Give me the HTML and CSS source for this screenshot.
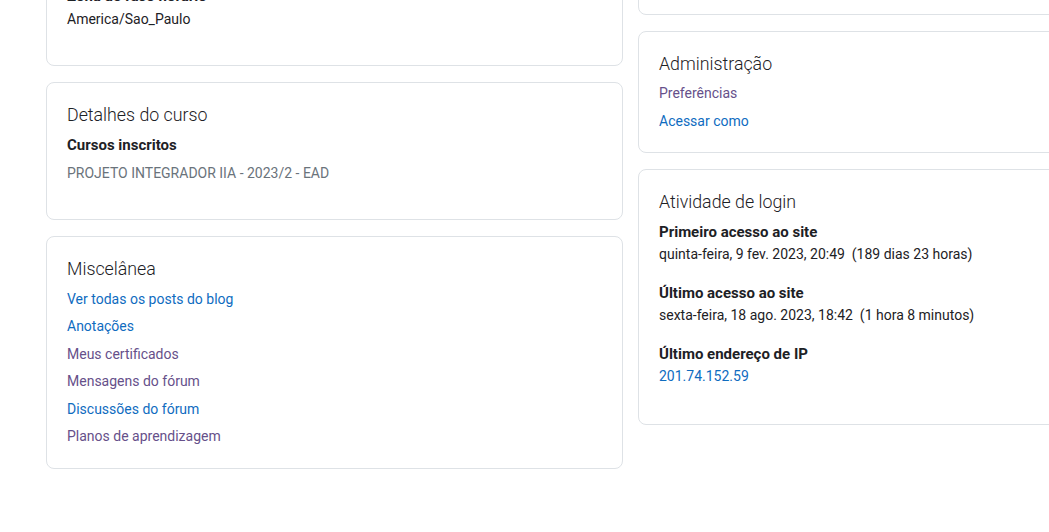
FILE: index.html
```html
<!DOCTYPE html>
<html lang="pt-br">
<head>
<meta charset="utf-8">
<title>Perfil</title>
<link rel="stylesheet" href="styles.css">
</head>
<body>
<div class="viewport">
  <div class="profile">
    <div class="column">
      <section class="card">
        <h3 class="lead">Detalhes do usuário</h3>
        <dl>
          <dt>Endereço de email</dt>
          <dd>aluno@example.com</dd>
          <dt>País</dt>
          <dd>Brasil</dd>
          <dt>Zona de fuso horário</dt>
          <dd>America/Sao_Paulo</dd>
        </dl>
      </section>
      <section class="card">
        <h3 class="lead">Detalhes do curso</h3>
        <dl>
          <dt>Cursos inscritos</dt>
          <dd class="courses"><a class="dimmed" href="#">PROJETO INTEGRADOR IIA - 2023/2 - EAD</a></dd>
        </dl>
      </section>
      <section class="card">
        <h3 class="lead">Miscelânea</h3>
        <ul class="links">
          <li><a href="#">Ver todas os posts do blog</a></li>
          <li><a href="#">Anotações</a></li>
          <li><a class="visited" href="#">Meus certificados</a></li>
          <li><a class="visited" href="#">Mensagens do fórum</a></li>
          <li><a href="#">Discussões do fórum</a></li>
          <li><a class="visited" href="#">Planos de aprendizagem</a></li>
        </ul>
      </section>
    </div>
    <div class="column">
      <section class="card">
        <h3 class="lead">Relatórios</h3>
        <ul class="links tight">
          <li><a href="#">Sessões do navegador</a></li>
          <li><a href="#">Visão geral das notas</a></li>
          <li><a href="#">Relatório de notas</a></li>
          <li><a href="#">Relatório de atividades</a></li>
          <li><a href="#">Logs de hoje</a></li>
        </ul>
      </section>
      <section class="card">
        <h3 class="lead">Administração</h3>
        <ul class="links">
          <li><a class="visited" href="#">Preferências</a></li>
          <li><a href="#">Acessar como</a></li>
        </ul>
      </section>
      <section class="card">
        <h3 class="lead">Atividade de login</h3>
        <dl class="login">
          <dt>Primeiro acesso ao site</dt>
          <dd>quinta-feira, 9 fev. 2023, 20:49&nbsp; (189 dias 23 horas)</dd>
          <dt>Último acesso ao site</dt>
          <dd>sexta-feira, 18 ago. 2023, 18:42&nbsp; (1 hora 8 minutos)</dd>
          <dt>Último endereço de IP</dt>
          <dd><a href="#">201.74.152.59</a></dd>
        </dl>
      </section>
    </div>
  </div>
</div>
</body>
</html>
```
FILE: styles.css
```css
html, body {
  margin: 0;
  padding: 0;
  background: #ffffff;
}

body {
  font-family: Roboto, "Liberation Sans", sans-serif;
  font-size: 14px;
  line-height: 22.5px;
  color: #1d2125;
}

.viewport {
  width: 1049px;
  height: 532px;
  overflow: hidden;
}

.profile {
  display: grid;
  grid-template-columns: 577px 577px;
  column-gap: 15px;
  align-items: start;
  padding-left: 46px;
  margin-top: -186.5px;
}

.column {
  display: flex;
  flex-direction: column;
  gap: 16px;
}

.card {
  border: 1px solid #dee2e6;
  border-radius: 8px;
  padding: 21px 20px 20px;
  background: #fff;
}

.lead {
  margin: 0 0 7px;
  font-size: 17.8px;
  font-weight: 300;
  line-height: 22.5px;
  color: #1d2125;
}

dl {
  margin: 0;
}

dt {
  font-size: 15px;
  font-weight: 700;
}

dd {
  margin: 0 0 15px;
}

.login dd {
  margin-bottom: 16px;
}

dd.courses {
  padding-top: 5.5px;
}

a {
  color: #0f6cbf;
  text-decoration: none;
}

a.visited {
  color: #66508a;
}

a.dimmed {
  color: #6a737b;
}

.links {
  list-style: none;
  margin: 0;
  padding: 0;
  display: flex;
  flex-direction: column;
  gap: 5px;
}

.links.tight {
  gap: 4px;
}
```
